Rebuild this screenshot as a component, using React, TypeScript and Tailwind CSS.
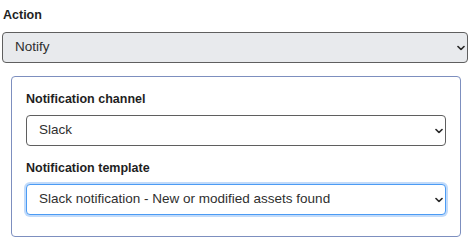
function Chevron() {
  return (
    <svg
      width="8"
      height="5"
      viewBox="0 0 8 5"
      fill="none"
      className="pointer-events-none absolute right-[3px] top-1/2 -translate-y-1/2"
    >
      <polyline
        points="1,1 4,4 7,1"
        stroke="#2b2b2b"
        strokeWidth="1.7"
        strokeLinecap="round"
        strokeLinejoin="round"
      />
    </svg>
  );
}

function Select({
  value,
  disabled,
  focused,
}: {
  value: string;
  disabled?: boolean;
  focused?: boolean;
}) {
  return (
    <div className="relative">
      <select
        disabled={disabled}
        defaultValue={value}
        className={`block h-[31px] w-full appearance-none rounded-[4px] border pl-[12px] pr-6 text-[13.5px] text-[#2f2f2f] outline-none ${
          disabled
            ? "border-[#5f5f5f] bg-[#e8eaed]"
            : focused
            ? "border-[#4b9bf4] bg-white shadow-[0_0_0_2px_#c2dbfa]"
            : "border-[#5f5f5f] bg-white"
        }`}
      >
        <option>{value}</option>
      </select>
      <Chevron />
    </div>
  );
}

export default function App() {
  return (
    <div className="bg-white pl-[2px] pt-[8px] font-['Liberation_Sans',Arial,sans-serif] text-[#1f1f1f]">
      <div className="w-[466px]">
        <label className="mb-[9px] block pl-[1px] text-[12.5px] leading-[15px] font-bold">
          Action
        </label>
        <Select value="Notify" disabled />
        <div className="ml-[9px] mr-[7px] mt-[13px] rounded-[4px] border border-[#7d8fbf] px-[14px] pb-[21px] pt-[15px]">
          <label className="mb-[8px] block text-[12.5px] leading-[15px] font-bold">
            Notification channel
          </label>
          <Select value="Slack" />
          <label className="mb-[8px] mt-[15px] block text-[12.5px] leading-[15px] font-bold">
            Notification template
          </label>
          <Select value="Slack notification - New or modified assets found" focused />
        </div>
      </div>
    </div>
  );
}
